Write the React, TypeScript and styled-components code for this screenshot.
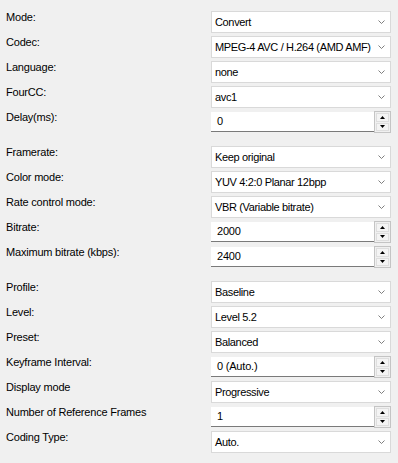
import React from 'react';
import styled, { createGlobalStyle } from 'styled-components';

const GlobalStyle = createGlobalStyle`
  html, body {
    margin: 0;
    padding: 0;
    background: #f0f0f0;
  }
  body {
    font-family: 'Liberation Sans', Arial, sans-serif;
    font-size: 11px;
    letter-spacing: -0.2px;
    color: #000;
  }
`;

type Field =
  | { label: string; kind: 'combo'; value: string }
  | { label: string; kind: 'spin'; value: string };

const sections: Field[][] = [
  [
    { label: 'Mode:', kind: 'combo', value: 'Convert' },
    { label: 'Codec:', kind: 'combo', value: 'MPEG-4 AVC / H.264 (AMD AMF)' },
    { label: 'Language:', kind: 'combo', value: 'none' },
    { label: 'FourCC:', kind: 'combo', value: 'avc1' },
    { label: 'Delay(ms):', kind: 'spin', value: '0' },
  ],
  [
    { label: 'Framerate:', kind: 'combo', value: 'Keep original' },
    { label: 'Color mode:', kind: 'combo', value: 'YUV 4:2:0 Planar 12bpp' },
    { label: 'Rate control mode:', kind: 'combo', value: 'VBR (Variable bitrate)' },
    { label: 'Bitrate:', kind: 'spin', value: '2000' },
    { label: 'Maximum bitrate (kbps):', kind: 'spin', value: '2400' },
  ],
  [
    { label: 'Profile:', kind: 'combo', value: 'Baseline' },
    { label: 'Level:', kind: 'combo', value: 'Level 5.2' },
    { label: 'Preset:', kind: 'combo', value: 'Balanced' },
    { label: 'Keyframe Interval:', kind: 'spin', value: '0 (Auto.)' },
    { label: 'Display mode', kind: 'combo', value: 'Progressive' },
    { label: 'Number of Reference Frames', kind: 'spin', value: '1' },
    { label: 'Coding Type:', kind: 'combo', value: 'Auto.' },
  ],
];

const Panel = styled.div`
  display: flex;
  flex-direction: column;
  padding: 11px 7px 0 6px;
`;

const Section = styled.div`
  display: grid;
  grid-template-columns: 1fr 180px;
  row-gap: 3px;
  margin-bottom: 13px;
`;

const Label = styled.div`
  align-self: start;
  line-height: 13px;
  white-space: nowrap;
`;

const Combo = styled.div`
  height: 22px;
  box-sizing: border-box;
  display: flex;
  align-items: center;
  justify-content: space-between;
  padding: 0 5px 0 3px;
  background: #fff;
  border: 1px solid #d9d9d9;
  line-height: 13px;
`;

const ComboText = styled.span`
  letter-spacing: -0.35px;
  white-space: nowrap;
`;

const Chevron = styled.svg`
  flex: none;
  width: 7px;
  height: 4px;
`;

const SpinBox = styled.div`
  height: 22px;
  display: flex;
`;

const SpinField = styled.div`
  flex: 1;
  margin-top: 1px;
  height: 20px;
  box-sizing: border-box;
  background: #fff;
  border-bottom: 1px solid #7a7a7a;
  padding-left: 6px;
  display: flex;
  align-items: center;
  line-height: 13px;
`;

const SpinButtons = styled.div`
  width: 17px;
  box-sizing: border-box;
  border: 1px solid #c4c4c4;
  background: #f0f0f0;
  display: flex;
  flex-direction: column;
  gap: 1px;
  padding: 1px;
`;

const SpinButton = styled.div`
  flex: 1;
  display: flex;
  align-items: center;
  justify-content: center;
  background: #f4f4f4;
  border: 1px solid #dedede;
`;

const Arrow = ({ up }: { up?: boolean }) => (
  <svg width="5" height="3" viewBox="0 0 5 3">
    <path d={up ? 'M0 3 L2.5 0 L5 3 Z' : 'M0 0 L5 0 L2.5 3 Z'} fill="#000" />
  </svg>
);

const FieldControl = ({ field }: { field: Field }) => {
  if (field.kind === 'spin') {
    return (
      <SpinBox>
        <SpinField>{field.value}</SpinField>
        <SpinButtons>
          <SpinButton>
            <Arrow up />
          </SpinButton>
          <SpinButton>
            <Arrow />
          </SpinButton>
        </SpinButtons>
      </SpinBox>
    );
  }
  return (
    <Combo>
      <ComboText>{field.value}</ComboText>
      <Chevron viewBox="0 0 7 4">
        <path d="M0.5 0.5 L3.5 3.5 L6.5 0.5" fill="none" stroke="#707070" strokeWidth="0.9" />
      </Chevron>
    </Combo>
  );
};

export default function App() {
  return (
    <>
      <GlobalStyle />
      <Panel>
        {sections.map((rows, i) => (
          <Section key={i}>
            {rows.map((field) => (
              <React.Fragment key={field.label}>
                <Label>{field.label}</Label>
                <FieldControl field={field} />
              </React.Fragment>
            ))}
          </Section>
        ))}
      </Panel>
    </>
  );
}
